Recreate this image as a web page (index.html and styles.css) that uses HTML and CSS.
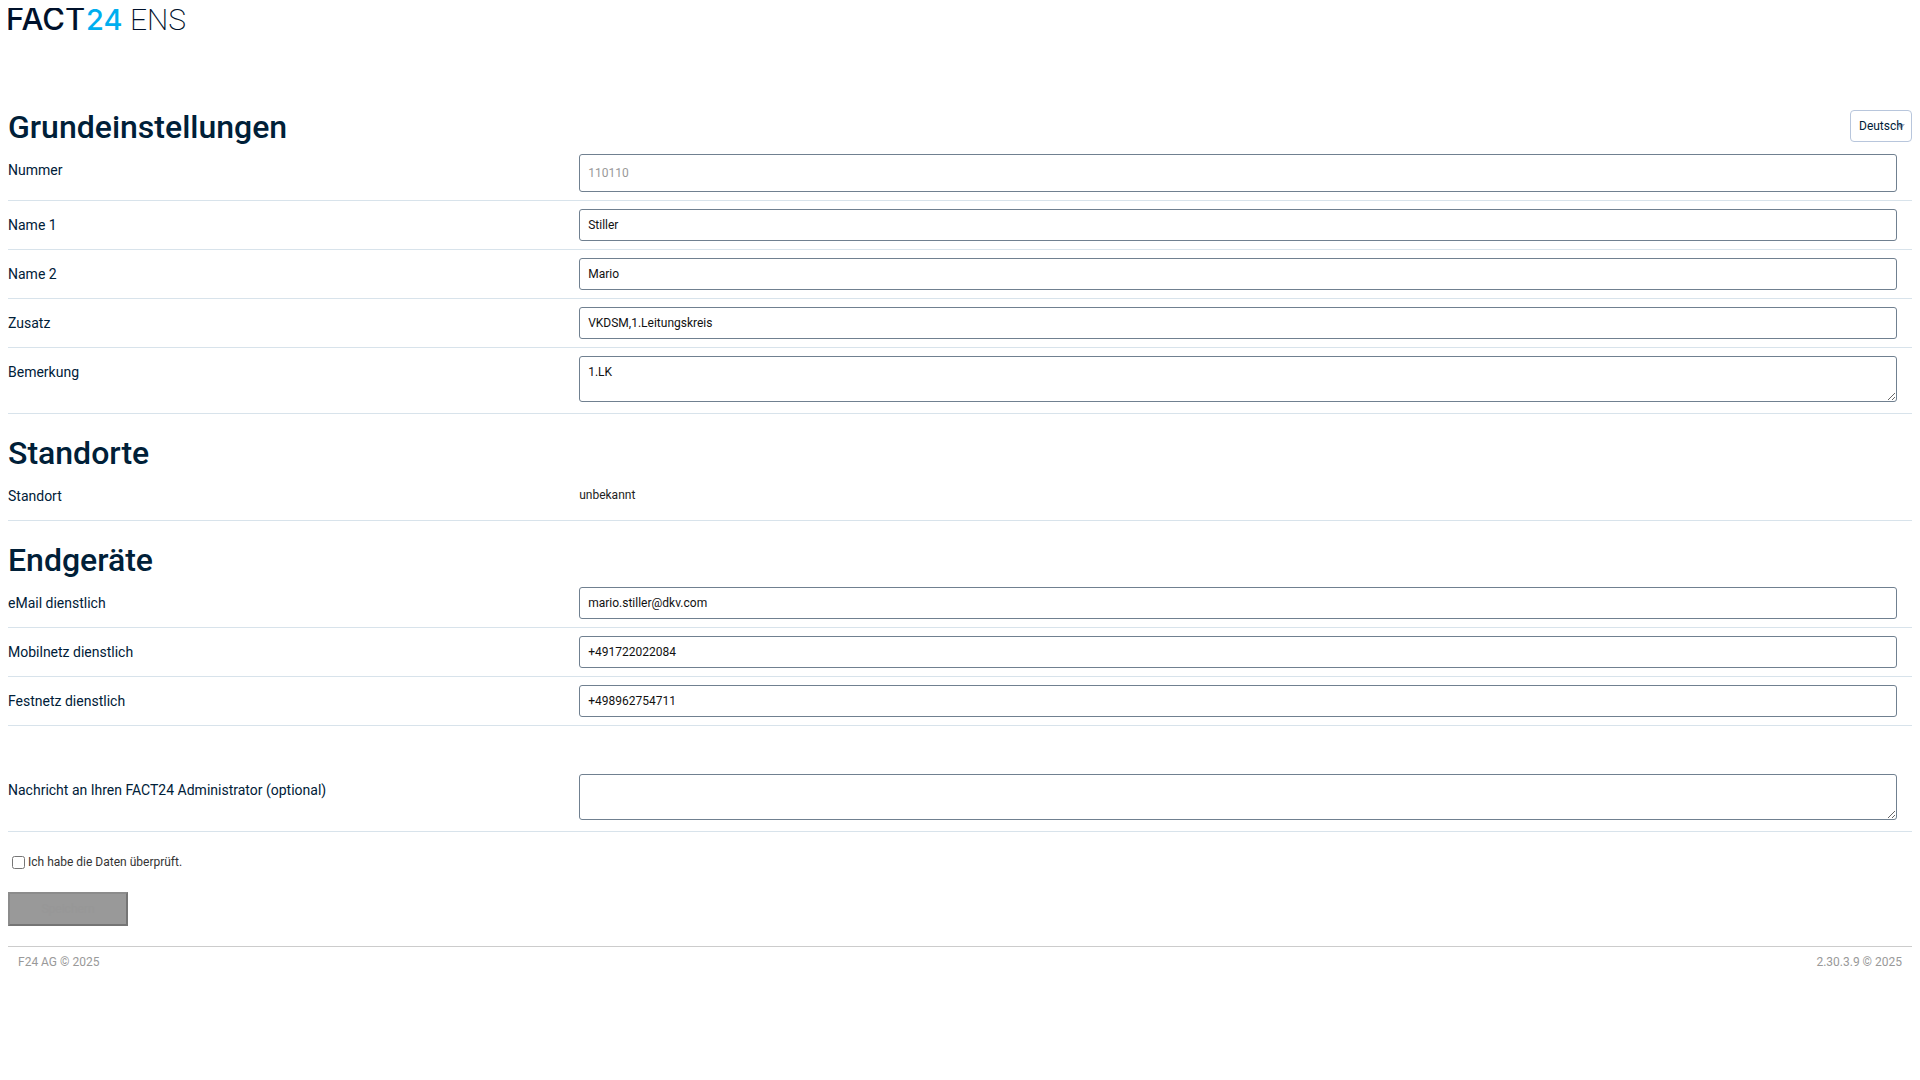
FILE: index.html
```html
<!DOCTYPE html>
<html lang="de">
<head>
    <meta charset="utf-8">
    <title>FACT24 ENS</title>
    <link rel="stylesheet" href="styles.css">
</head>
<body>
    <header class="header">
        <svg class="logo" width="184" height="32" viewBox="0 0 184 32" role="img" aria-label="FACT24 ENS">
            <text class="logo-fact" x="-2" y="22">FACT</text>
            <text class="logo-24" x="78" y="22">24</text>
            <text class="logo-ens" x="122" y="22">ENS</text>
        </svg>
    </header>

    <form>
        <div class="section-head">
            <h1>Grundeinstellungen</h1>
            <select class="language" aria-label="Sprache">
                <option>Deutsch</option>
                <option>English</option>
            </select>
        </div>
        <div class="row">
            <label for="nummer">Nummer</label>
            <div class="field"><input type="text" id="nummer" class="nummer" value="110110" disabled></div>
        </div>
        <div class="row">
            <label for="name1">Name 1</label>
            <div class="field"><input type="text" id="name1" value="Stiller"></div>
        </div>
        <div class="row">
            <label for="name2">Name 2</label>
            <div class="field"><input type="text" id="name2" value="Mario"></div>
        </div>
        <div class="row">
            <label for="zusatz">Zusatz</label>
            <div class="field"><input type="text" id="zusatz" value="VKDSM,1.Leitungskreis"></div>
        </div>
        <div class="row">
            <label for="bemerkung">Bemerkung</label>
            <div class="field"><textarea id="bemerkung">1.LK</textarea></div>
        </div>

        <div class="section-head">
            <h1>Standorte</h1>
        </div>
        <div class="row">
            <span class="label">Standort</span>
            <div class="field"><span class="value">unbekannt</span></div>
        </div>

        <div class="section-head">
            <h1>Endgeräte</h1>
        </div>
        <div class="row">
            <label for="email">eMail dienstlich</label>
            <div class="field"><input type="email" id="email" value="mario.stiller@dkv.com"></div>
        </div>
        <div class="row">
            <label for="mobil">Mobilnetz dienstlich</label>
            <div class="field"><input type="tel" id="mobil" value="+491722022084"></div>
        </div>
        <div class="row">
            <label for="festnetz">Festnetz dienstlich</label>
            <div class="field"><input type="tel" id="festnetz" value="+498962754711"></div>
        </div>

        <div class="row message">
            <label for="nachricht">Nachricht an Ihren FACT24 Administrator (optional)</label>
            <div class="field"><textarea id="nachricht"></textarea></div>
        </div>

        <div class="confirm">
            <input type="checkbox" id="confirm">
            <label for="confirm">Ich habe die Daten überprüft.</label>
        </div>
        <button type="submit" class="submit" disabled>Speichern</button>
    </form>

    <footer class="footer">
        <span>F24 AG © 2025</span>
        <span>2.30.3.9 © 2025</span>
    </footer>
</body>
</html>
```

FILE: styles.css
```css
* {
    box-sizing: border-box;
}
body {
    margin: 8px;
    font-family: Roboto, sans-serif;
    font-size: 12px;
    line-height: 16px;
    color: #333;
    background-color: #fff;
}
.header {
    height: 80px;
}
.logo {
    display: block;
    overflow: visible;
}
.logo text {
    font-family: Inter, sans-serif;
    font-size: 30px;
}
.logo .logo-fact {
    font-weight: 500;
    font-size: 31px;
    fill: #00112b;
}
.logo .logo-24 {
    font-weight: 500;
    font-size: 29px;
    fill: #00aeef;
}
.logo .logo-ens {
    font-family: Roboto, sans-serif;
    font-weight: 200;
    fill: #00112b;
}
.section-head {
    display: flex;
    justify-content: space-between;
    align-items: flex-end;
    height: 58px;
    padding-bottom: 4px;
}
h1 {
    margin: 0;
    font-size: 32px;
    line-height: 30px;
    font-weight: 500;
    color: #002038;
}
.language {
    width: 62px;
    height: 32px;
    padding: 0 8px;
    appearance: none;
    border: 1px solid #b8c6dc;
    border-radius: 4px;
    font-family: inherit;
    font-size: 12px;
    color: #002038;
    background: #fff url("data:image/svg+xml,%3Csvg xmlns='http://www.w3.org/2000/svg' width='8' height='5'%3E%3Cpath d='M0 0h8L4 5z' fill='%23a3b1ca'/%3E%3C/svg%3E") no-repeat right 6px center;
}
.row {
    display: grid;
    grid-template-columns: 30% 1fr;
    min-height: 49px;
    padding: 8px 0;
    border-bottom: 1px solid #d8e3eb;
}
.row label,
.label {
    padding-top: 8px;
    font-size: 14px;
    color: #002038;
}
.field {
    padding-right: 15px;
}
.field input,
.field textarea {
    display: block;
    width: 100%;
    height: 32px;
    padding: 0 8px;
    border: 1px solid #708090;
    border-radius: 3px;
    font-family: inherit;
    font-size: 12px;
    color: #111;
    background-color: #fff;
}
.field .nummer {
    height: 38px;
    color: #999;
}
.field textarea {
    height: 46px;
    margin-bottom: 3px;
    padding: 7px 8px;
    line-height: 16px;
}
.value {
    display: block;
    padding-top: 7px;
    color: #222;
}
.message {
    margin-top: 40px;
}
.confirm {
    display: flex;
    align-items: center;
    gap: 3px;
    margin: 22px 0;
}
.confirm input {
    margin: 0 0 0 4px;
}
.submit {
    display: block;
    width: 120px;
    height: 34px;
    border: 2px solid;
    border-color: #8c8c8c #757575 #757575 #8c8c8c;
    font-family: inherit;
    font-size: 12px;
    color: #979797;
    background-color: #999;
}
.footer {
    display: flex;
    justify-content: space-between;
    margin-top: 20px;
    padding: 7px 10px;
    border-top: 1px solid #ccc;
    color: #999;
}
```
